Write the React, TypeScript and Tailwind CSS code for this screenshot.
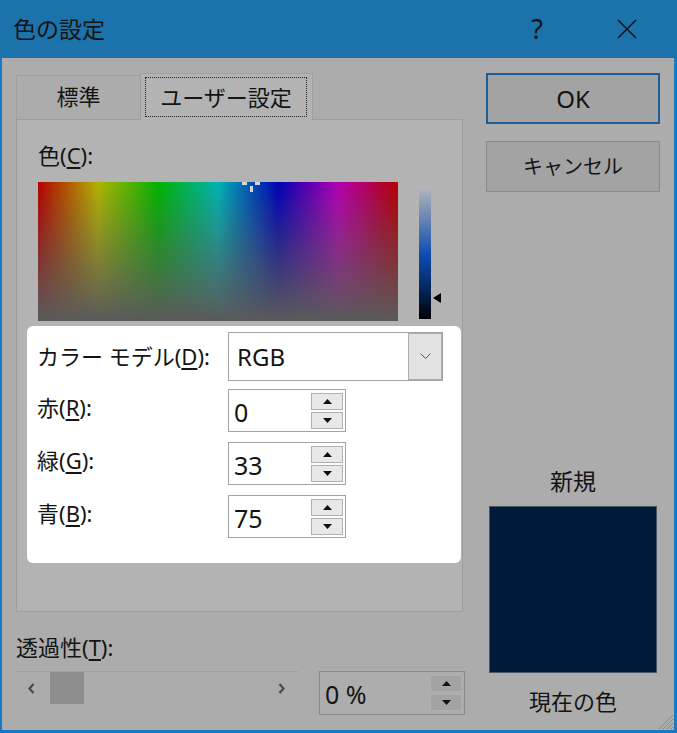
import React from 'react';

const Tri = ({ up }: { up: boolean }) => (
  <svg width="9" height="5" viewBox="0 0 9 5">
    <polygon points={up ? '0,5 9,5 4.5,0' : '0,0 9,0 4.5,5'} fill="#111" />
  </svg>
);

const SpinButtons = ({ tone }: { tone: string }) => (
  <div className="flex flex-col gap-[2px] pr-[2px] pt-[3px]">
    <div className={`w-[32px] h-[17px] border border-[#b0b0b0] flex items-center justify-center ${tone}`}>
      <Tri up />
    </div>
    <div className={`w-[32px] h-[17px] border border-[#b0b0b0] flex items-center justify-center ${tone}`}>
      <Tri up={false} />
    </div>
  </div>
);

const NumField = ({ value }: { value: string }) => (
  <div className="w-[118px] h-[43px] border border-[#a3a3a3] bg-white flex justify-between">
    <span className="pl-[5px] pt-[6px] text-[25px] leading-[32px]">{value}</span>
    <SpinButtons tone="bg-[#e8e8e8]" />
  </div>
);

const Label = ({ pre, k }: { pre: string; k: string }) => (
  <span className="text-[22px] leading-[28px]">
    {pre}(<span className="underline underline-offset-[3px]">{k}</span>):
  </span>
);

export default function App() {
  return (
    <div className="w-[677px] h-[733px] bg-[#1778c4] flex flex-col font-['Noto_Sans','Noto_Sans_CJK_JP',sans-serif] text-[#141414] overflow-hidden">
      {/* title bar */}
      <div className="h-[58px] bg-[#1c72aa] flex items-center pl-[13px] pr-[27px]">
        <span className="text-[23px] leading-[30px]">色の設定</span>
        <span className="ml-auto w-[46px] text-center text-[27px] leading-[30px]">?</span>
        <span className="ml-[44px] w-[46px] flex justify-center">
          <svg width="20" height="20" viewBox="0 0 20 20">
            <path d="M1 1 L19 19 M19 1 L1 19" stroke="#141414" strokeWidth="1.5" />
          </svg>
        </span>
      </div>

      {/* body */}
      <div className="flex-1 ml-[2px] mr-[3px] mb-[3px] bg-[#acacac] relative flex pl-[14px] pt-[15px]">
        {/* left column */}
        <div className="w-[449px] flex flex-col">
          {/* tabs */}
          <div className="h-[46px] flex items-end">
            <div className="w-[124px] h-[44px] border-t border-l border-[#9e9e9e] flex items-center justify-center text-[22px] pb-[2px]">
              標準
            </div>
            <div className="relative z-10 -mb-px w-[173px] h-[47px] border-t border-x border-[#9e9e9e] bg-[#b3b3b3] pl-[4px] pr-[5px] pt-[3px] pb-[3px]">
              <div className="h-full border border-dotted border-[#222] flex items-center justify-center text-[22px]">
                ユーザー設定
              </div>
            </div>
          </div>

          {/* tab panel */}
          <div className="w-[447px] h-[493px] border border-[#9e9e9e] bg-[#b3b3b3] flex flex-col pt-[21px]">
            <div className="pl-[21px]">
              <Label pre="色" k="C" />
            </div>
            <div className="pl-[21px] mt-[12px] flex">
              <div className="relative w-[360px] h-[139px] bg-[linear-gradient(to_bottom,rgba(90,90,90,0),#5a5a5a),linear-gradient(to_right,#b30000,#b3b300,#00b300,#00b3b3,#0000b3,#b300b3,#b30000)]">
                <span className="absolute left-[204px] top-0 w-[5px] h-[3px] bg-[#cfd6dc]" />
                <span className="absolute left-[217px] top-0 w-[5px] h-[3px] bg-[#cfd6dc]" />
                <span className="absolute left-[212px] top-[4px] w-[3px] h-[6px] bg-[#cfd6dc]" />
              </div>
              <div className="relative ml-[21px] mt-[5px] w-[12px] h-[132px] bg-[linear-gradient(to_bottom,#b3b6bc,#7088b4_22%,#0c4cb0_52%,#062a66_75%,#000)]">
                <svg className="absolute left-[14px] top-[106px]" width="8" height="10" viewBox="0 0 8 10">
                  <polygon points="0,5 8,0 8,10" fill="#000" />
                </svg>
              </div>
            </div>

            {/* highlighted white area */}
            <div className="mt-[5px] ml-[10px] w-[434px] h-[237px] bg-white rounded-[6px] pl-[10px] pt-[6px] flex flex-col">
              <div className="flex items-center h-[49px]">
                <div className="w-[191px]">
                  <span className="text-[22px] leading-[28px]">
                    カラー モデル(<span className="underline underline-offset-[3px]">D</span>):
                  </span>
                </div>
                <div className="w-[215px] h-[49px] border border-[#a3a3a3] flex items-center justify-between">
                  <span className="pl-[8px] text-[24px] leading-[30px]">RGB</span>
                  <div className="w-[34px] h-[47px] border border-[#adadad] bg-[#e3e3e3] flex items-center justify-center">
                    <svg width="11" height="7" viewBox="0 0 11 7">
                      <polyline points="0.5,0.5 5.5,5.5 10.5,0.5" fill="none" stroke="#555" strokeWidth="1" />
                    </svg>
                  </div>
                </div>
              </div>
              <div className="flex items-center mt-[8px]">
                <div className="w-[191px] -mt-[7px]">
                  <Label pre="赤" k="R" />
                </div>
                <NumField value="0" />
              </div>
              <div className="flex items-center mt-[10px]">
                <div className="w-[191px] -mt-[7px]">
                  <Label pre="緑" k="G" />
                </div>
                <NumField value="33" />
              </div>
              <div className="flex items-center mt-[10px]">
                <div className="w-[191px] -mt-[7px]">
                  <Label pre="青" k="B" />
                </div>
                <NumField value="75" />
              </div>
            </div>
          </div>

          {/* transparency */}
          <div className="mt-[21px]">
            <Label pre="透過性" k="T" />
          </div>
          <div className="mt-[9px] flex items-start">
            <div className="w-[282px] h-[34px] border-t border-[#a0a0a0] flex items-center">
              <svg className="ml-[12px]" width="7" height="11" viewBox="0 0 7 11">
                <polyline points="5.5,1 1.5,5.5 5.5,10" fill="none" stroke="#4a4a4a" strokeWidth="2.2" />
              </svg>
              <div className="ml-[15px] w-[34px] h-[32px] bg-[#8e8e8e] self-start" />
              <svg className="ml-auto mr-[13px]" width="7" height="11" viewBox="0 0 7 11">
                <polyline points="1.5,1 5.5,5.5 1.5,10" fill="none" stroke="#4a4a4a" strokeWidth="2.2" />
              </svg>
            </div>
            <div className="ml-[21px] w-[146px] h-[44px] border border-[#8a8a8a] bg-[#adadad] flex justify-between">
              <span className="pl-[5px] pt-[6px] text-[25px] leading-[32px]">0 %</span>
              <SpinButtons tone="bg-[#a3a3a3]" />
            </div>
          </div>
        </div>

        {/* right column */}
        <div className="ml-[21px] w-[174px] flex flex-col">
          <div className="h-[51px] border-2 border-[#1d5f94] bg-[#a3a3a3] flex items-center justify-center text-[24px]">
            OK
          </div>
          <div className="mt-[17px] h-[51px] border border-[#8a8a8a] bg-[#a3a3a3] flex items-center justify-center text-[20px]">
            キャンセル
          </div>
          <div className="mt-[274px] text-center text-[23px] leading-[30px]">新規</div>
          <div className="mt-[10px] ml-[3px] w-[168px] h-[167px] bg-[#001a3a] border border-[#4a5563]" />
          <div className="mt-[13px] text-center text-[22px] leading-[30px]">現在の色</div>
        </div>

        {/* resize grip */}
        <svg className="absolute right-0 bottom-0" width="18" height="18" viewBox="0 0 18 18">
          <path d="M17 3 L3 17 M17 7 L7 17 M17 11 L11 17 M17 15 L15 17" stroke="#8a8a8a" strokeWidth="1" />
        </svg>
      </div>
    </div>
  );
}
